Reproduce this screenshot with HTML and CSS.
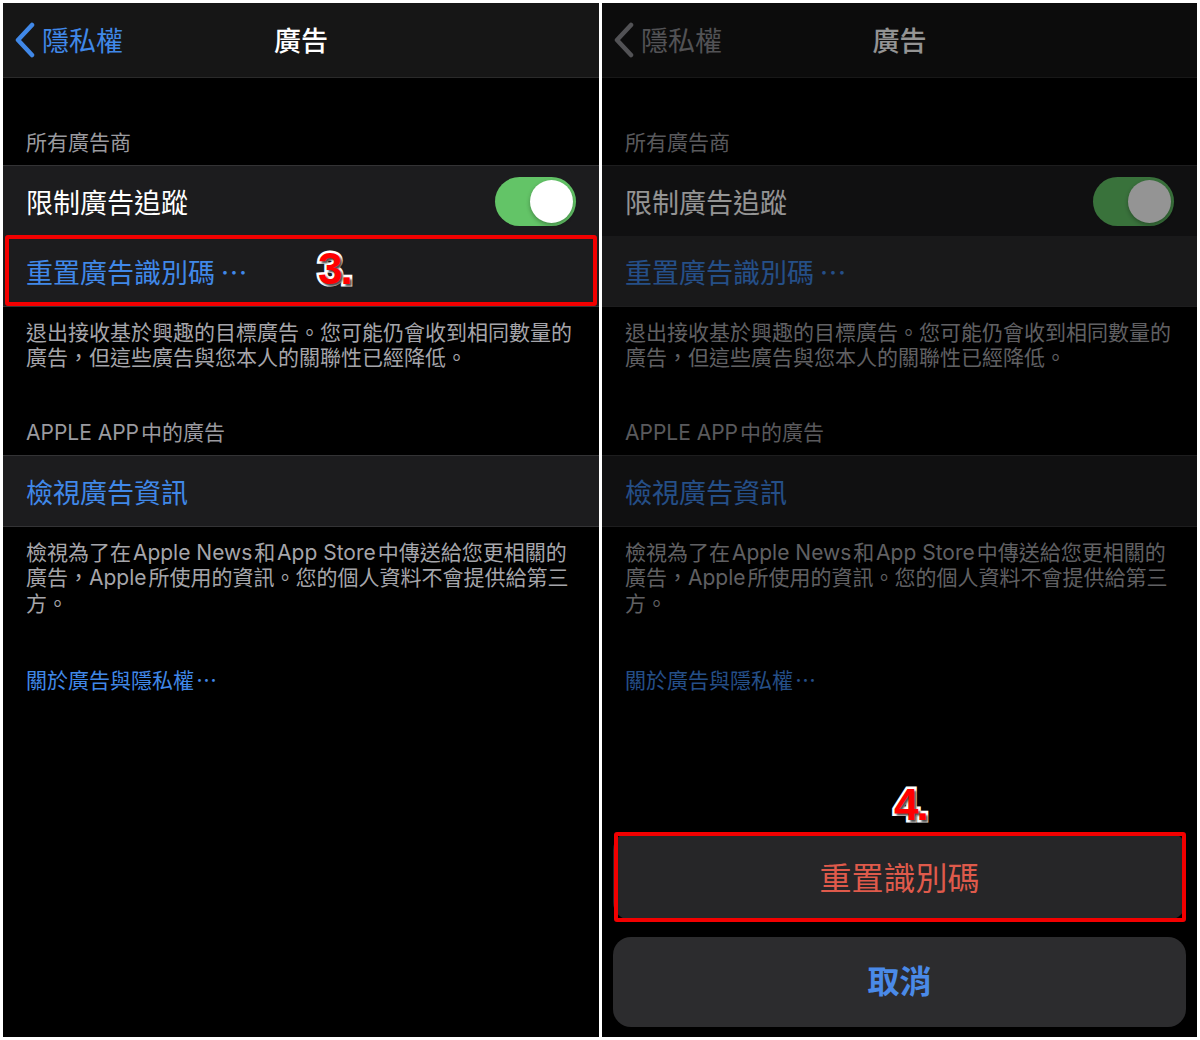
FILE: index.html
```html
<!DOCTYPE html>
<html lang="zh-Hant">
<head>
<meta charset="utf-8">
<title>廣告</title>
<link rel="stylesheet" href="styles.css">
</head>
<body>
<div class="stage">
  <section class="phone">
    <header class="nav">
      <div class="back">
        <svg viewBox="0 0 22 36" aria-hidden="true"><polyline points="19,3 5,18 19,33" fill="none" stroke="currentColor" stroke-width="4.5" stroke-linecap="round" stroke-linejoin="round"/></svg>
        <span>隱私權</span>
      </div>
      <div class="title">廣告</div>
      <div></div>
    </header>
    <div class="sec-header">所有廣告商</div>
    <div class="group">
      <div class="cell"><span>限制廣告追蹤</span><span class="switch"><span class="knob"></span></span></div>
      <div class="cell link"><span>重置廣告識別碼<span class="ell">⋯</span></span></div>
    </div>
    <p class="footer">退出接收基於興趣的目標廣告。您可能仍會收到相同數量的<br>廣告，但這些廣告與您本人的關聯性已經降低。</p>
    <div class="sec-header second">APPLE APP&#8202;中的廣告</div>
    <div class="group">
      <div class="cell link">檢視廣告資訊</div>
    </div>
    <p class="footer">檢視為了在&#8202;Apple News&#8202;和&#8202;App Store&#8202;中傳送給您更相關的<br>廣告，Apple&#8202;所使用的資訊。您的個人資料不會提供給第三<br>方。</p>
    <div class="more">關於廣告與隱私權<span class="ell">⋯</span></div>
    <div class="hl hl-3"></div>
    <div class="mark mark-3">3.</div>
  </section>

  <section class="phone right">
    <header class="nav">
      <div class="back">
        <svg viewBox="0 0 22 36" aria-hidden="true"><polyline points="19,3 5,18 19,33" fill="none" stroke="currentColor" stroke-width="4.5" stroke-linecap="round" stroke-linejoin="round"/></svg>
        <span>隱私權</span>
      </div>
      <div class="title">廣告</div>
      <div></div>
    </header>
    <div class="sec-header">所有廣告商</div>
    <div class="group">
      <div class="cell"><span>限制廣告追蹤</span><span class="switch"><span class="knob"></span></span></div>
      <div class="cell link pressed"><span>重置廣告識別碼<span class="ell">⋯</span></span></div>
    </div>
    <p class="footer">退出接收基於興趣的目標廣告。您可能仍會收到相同數量的<br>廣告，但這些廣告與您本人的關聯性已經降低。</p>
    <div class="sec-header second">APPLE APP&#8202;中的廣告</div>
    <div class="group">
      <div class="cell link">檢視廣告資訊</div>
    </div>
    <p class="footer">檢視為了在&#8202;Apple News&#8202;和&#8202;App Store&#8202;中傳送給您更相關的<br>廣告，Apple&#8202;所使用的資訊。您的個人資料不會提供給第三<br>方。</p>
    <div class="more">關於廣告與隱私權<span class="ell">⋯</span></div>
    <div class="dim"></div>
    <div class="sheet">
      <div class="sheet-btn sheet-action">重置識別碼</div>
      <div class="sheet-btn sheet-cancel">取消</div>
    </div>
    <div class="hl hl-4"></div>
    <div class="mark mark-4">4.</div>
  </section>
</div>
</body>
</html>
```
FILE: styles.css
```css
* { box-sizing: border-box; }
html, body { margin: 0; padding: 0; }
body {
  background: #fff;
  font-family: "Inter", "Noto Sans CJK TC", "Noto Sans", sans-serif;
}
.stage {
  display: flex;
  gap: 3px;
  padding: 3px;
  width: 1200px;
  height: 1040px;
}
.phone {
  position: relative;
  flex: none;
  width: 596px;
  height: 1034px;
  background: #000;
  color: #fff;
  overflow: hidden;
}
.phone.right { width: 595px; }

.nav {
  height: 75px;
  background: #161616;
  border-bottom: 1px solid #2a2a2a;
  display: grid;
  grid-template-columns: 1fr auto 1fr;
  align-items: center;
  padding-top: 3px;
}
.back {
  display: flex;
  align-items: center;
  padding-left: 10px;
  color: #4088e8;
  font-size: 27px;
  line-height: 1;
}
.back svg { width: 22px; height: 36px; margin-right: 7px; flex: none; margin-top: -3px; }
.right .back { color: #8e8e93; }
.title {
  font-size: 27px;
  font-weight: 500;
  line-height: 1;
}

.sec-header {
  height: 87px;
  display: flex;
  align-items: flex-end;
  padding: 0 23px 10px;
  font-size: 21px;
  line-height: 25px;
  color: #9a9a9f;
}
.sec-header.second { height: 84.5px; }

.group {
  background: #1c1c1e;
  border-top: 1px solid #333335;
  border-bottom: 1px solid #333335;
}
.cell {
  height: 70px;
  display: flex;
  align-items: center;
  justify-content: space-between;
  padding: 4px 23px 0;
  font-size: 27px;
  line-height: 1;
}
.cell.link { color: #4088e8; }
.cell.pressed { background: #2c2c2e; }
.ell { margin-left: 0.2em; }
.more .ell { margin-left: 0.1em; }

.switch {
  flex: none;
  width: 81px;
  height: 49px;
  margin-top: -4px;
  border-radius: 25px;
  background: #63c467;
  display: flex;
  align-items: center;
  justify-content: flex-end;
  padding: 3px;
}
.knob {
  width: 43px;
  height: 43px;
  border-radius: 50%;
  background: #fff;
  box-shadow: 0 2px 4px rgba(0, 0, 0, 0.3);
}

.footer {
  margin: 0;
  padding: 12.5px 12px 0 23px;
  font-size: 21px;
  line-height: 25.5px;
  color: #a5a5aa;
}
.more {
  padding: 51.5px 23px 0;
  font-size: 21px;
  line-height: 25px;
  color: #4088e8;
}

.dim {
  position: absolute;
  inset: 0;
  background: rgba(0, 0, 0, 0.42);
}
.sheet {
  position: absolute;
  left: 11px;
  right: 11px;
  bottom: 10px;
  display: flex;
  flex-direction: column;
  gap: 17px;
}
.sheet-btn {
  display: flex;
  align-items: center;
  justify-content: center;
  border-radius: 18px;
  font-size: 32px;
  line-height: 1;
}
.sheet-action {
  height: 88px;
  padding-top: 6px;
  background: #262628;
  color: #df5a4b;
}
.sheet-cancel {
  height: 90px;
  background: #2c2c2e;
  color: #4a8ae8;
  font-weight: 600;
}

.hl {
  position: absolute;
  border: 4px solid #f20000;
  border-radius: 3px;
}
.hl-3 { left: 2px; top: 232px; width: 592px; height: 71px; }
.hl-4 { left: 12px; top: 829px; width: 572px; height: 90px; }

.mark {
  position: absolute;
  font: bold 44px/1 "Liberation Sans", sans-serif;
  color: #f00;
  -webkit-text-stroke: 5px #fff;
  paint-order: stroke fill;
  text-shadow: 2px 2px 2px rgba(0, 0, 0, 0.7);
  letter-spacing: -2px;
}
.mark-3 { left: 315px; top: 244px; }
.mark-4 { left: 292px; top: 780px; }
```
